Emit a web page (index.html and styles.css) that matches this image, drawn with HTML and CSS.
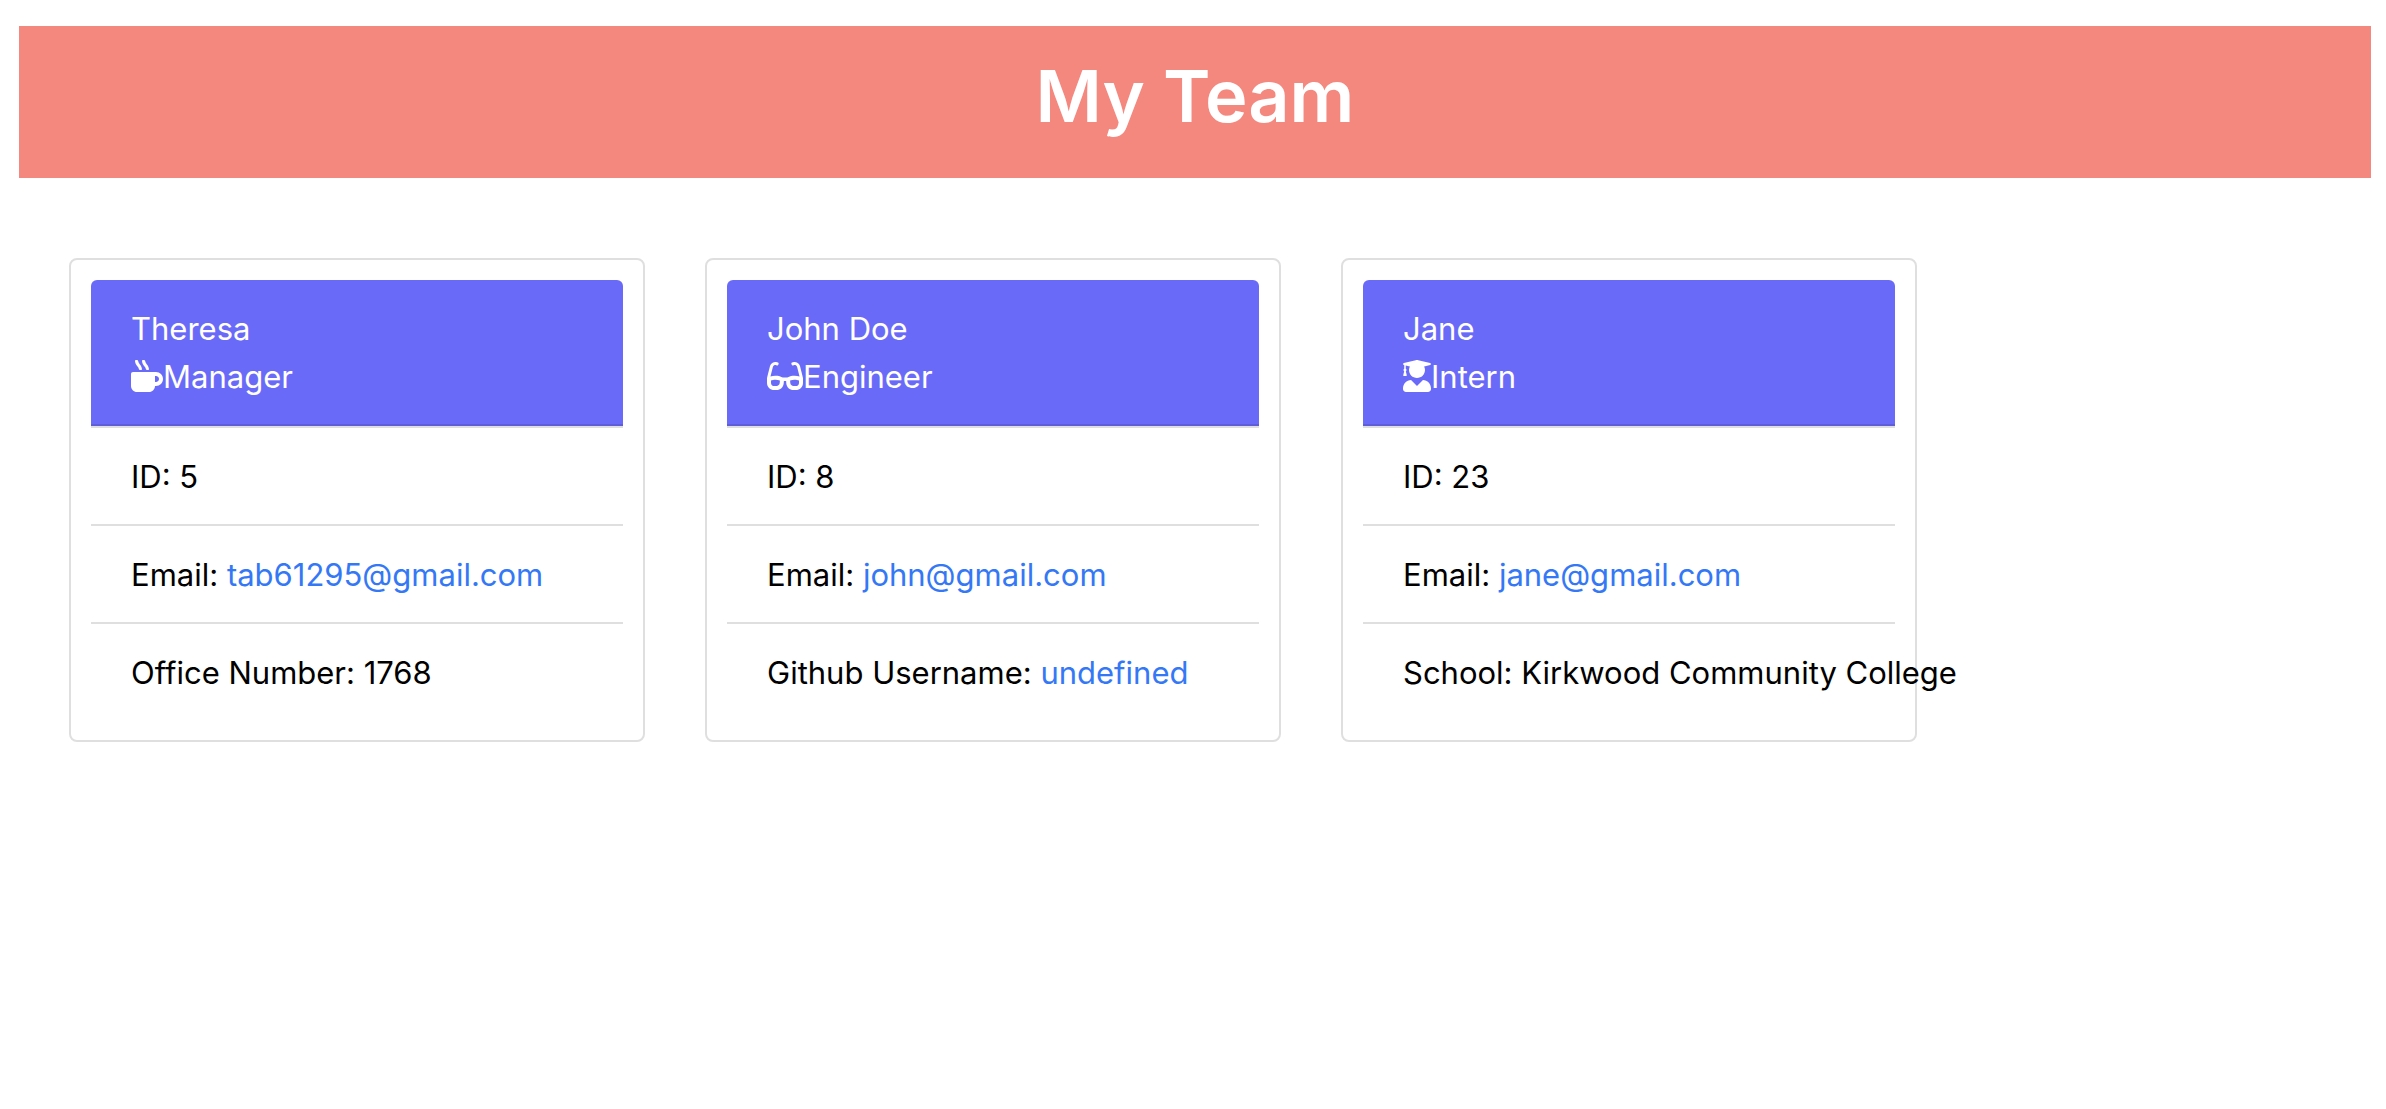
FILE: index.html
```html
<!DOCTYPE html>
<html lang="en">
<head>
  <meta charset="utf-8">
  <meta name="viewport" content="width=device-width, initial-scale=1">
  <title>My Team</title>
  <link rel="stylesheet" href="styles.css">
</head>
<body>
  <header class="banner">
    <h1 class="banner-title">My Team</h1>
  </header>
  <main class="team">
    <section class="card">
      <div class="card-header">
        <div>Theresa</div>
        <div><svg class="icon" viewBox="0 0 512 512" aria-hidden="true"><path d="M127.1 146.5c1.3 7.7 8 13.5 16 13.5h16.5c9.8 0 17.6-8.5 16.3-18-3.8-28.2-16.4-54.2-36.6-74.7-14.4-14.7-23.6-33.3-26.4-53.5C111.8 5.9 105 0 96.8 0H80.4C70.6 0 63 8.5 64.1 18c3.9 31.9 18 61.3 40.6 84.4 12 12.2 19.7 27.5 22.4 44.1zm112 0c1.3 7.7 8 13.5 16 13.5h16.5c9.8 0 17.6-8.5 16.3-18-3.8-28.2-16.4-54.2-36.6-74.7-14.4-14.7-23.6-33.3-26.4-53.5C223.8 5.9 217 0 208.8 0h-16.4c-9.8 0-17.5 8.5-16.3 18 3.9 31.9 18 61.3 40.6 84.4 12 12.2 19.7 27.5 22.4 44.1zM400 192H32c-17.7 0-32 14.3-32 32v192c0 53 43 96 96 96h192c53 0 96-43 96-96h16c61.8 0 112-50.2 112-112s-50.2-112-112-112zm0 160h-16v-96h16c26.5 0 48 21.5 48 48s-21.5 48-48 48z"/></svg>Manager</div>
      </div>
      <ul class="details">
        <li>ID: 5</li>
        <li>Email: <a href="mailto:tab61295@gmail.com">tab61295@gmail.com</a></li>
        <li>Office Number: 1768</li>
      </ul>
    </section>
    <section class="card">
      <div class="card-header">
        <div>John Doe</div>
        <div><svg class="icon" viewBox="0 0 576 512" aria-hidden="true"><path d="M574.1 280.37L528.75 98.66c-5.91-23.7-21.59-44.05-43-55.81-21.44-11.73-46.97-14.11-70.19-6.33l-15.25 5.08c-8.39 2.79-12.92 11.86-10.12 20.24l5.06 15.18c2.79 8.38 11.85 12.91 20.23 10.12l13.18-4.39c10.87-3.62 23-3.57 33.16 1.73 10.29 5.37 17.57 14.56 20.37 25.82l38.46 153.82c-22.19-6.81-49.79-12.46-81.2-12.46-34.77 0-73.98 7.02-114.85 26.74h-73.18c-40.87-19.74-80.08-26.75-114.86-26.75-31.42 0-59.02 5.65-81.21 12.46l38.46-153.83c2.79-11.25 10.09-20.45 20.38-25.81 10.16-5.3 22.28-5.35 33.15-1.73l13.17 4.39c8.38 2.79 17.44-1.74 20.23-10.12l5.06-15.18c2.8-8.38-1.73-17.45-10.12-20.24l-15.25-5.08c-23.22-7.78-48.75-5.41-70.19 6.33-21.41 11.77-37.09 32.11-43 55.8L1.9 280.37A64.218 64.218 0 0 0 0 295.86v70.25C0 429.01 51.58 480 115.2 480h37.12c60.28 0 110.37-45.94 114.88-105.37l2.93-38.63h35.75l2.93 38.63C313.31 434.06 363.4 480 423.68 480h37.12c63.62 0 115.2-50.99 115.2-113.88v-70.25c0-5.23-.64-10.43-1.9-15.5zm-370.72 89.42c-1.97 25.91-24.4 46.21-51.06 46.21H115.2C86.97 416 64 393.62 64 366.11v-37.54c18.12-6.49 43.42-12.92 72.58-12.92 23.86 0 47.26 4.33 69.93 12.92l-3.13 41.22zM512 366.12c0 27.51-22.97 49.88-51.2 49.88h-37.12c-26.67 0-49.1-20.3-51.06-46.21l-3.13-41.22c22.67-8.59 46.08-12.92 69.95-12.92 29.12 0 54.43 6.44 72.55 12.93v37.54z"/></svg>Engineer</div>
      </div>
      <ul class="details">
        <li>ID: 8</li>
        <li>Email: <a href="mailto:john@gmail.com">john@gmail.com</a></li>
        <li>Github Username: <a href="https://github.com/undefined">undefined</a></li>
      </ul>
    </section>
    <section class="card">
      <div class="card-header">
        <div>Jane</div>
        <div><svg class="icon" viewBox="0 0 448 512" aria-hidden="true"><path d="M319.4 320.6L224 416l-95.4-95.4C57.1 323.7 0 382.2 0 454.4v9.6c0 26.5 21.5 48 48 48h352c26.5 0 48-21.5 48-48v-9.6c0-72.2-57.1-130.7-128.6-133.8zM13.6 79.8l6.4 1.5v58.4c-7 4.2-12 11.5-12 20.3 0 8.4 4.6 15.4 11.1 19.7L3.5 242c-1.7 6.9 2.1 14 7.6 14h41.8c5.5 0 9.3-7.1 7.6-14l-15.6-62.3C51.4 175.4 56 168.4 56 160c0-8.8-5-16.1-12-20.3V87.1l66 15.9c-8.6 17.2-14 36.4-14 57 0 70.7 57.3 128 128 128s128-57.3 128-128c0-20.6-5.3-39.8-14-57l96.3-23.2c18.2-4.4 18.2-27.1 0-31.5l-190.4-46c-13-3.1-26.7-3.1-39.7 0L13.6 48.2c-18.1 4.4-18.1 27.2 0 31.6z"/></svg>Intern</div>
      </div>
      <ul class="details">
        <li>ID: 23</li>
        <li>Email: <a href="mailto:jane@gmail.com">jane@gmail.com</a></li>
        <li>School: Kirkwood Community College</li>
      </ul>
    </section>
  </main>
</body>
</html>
```
FILE: styles.css
```css
* {
  box-sizing: border-box;
}

body {
  margin: 0;
  padding: 26px 15px 26px 19px;
  background: #fff;
  color: #000;
  font-family: Inter, "Liberation Sans", sans-serif;
  font-size: 31px;
  line-height: 48px;
}

.banner {
  padding: 22px 20px 34px;
  background: #f4877e;
  color: #fff;
  text-align: center;
}

.banner-title {
  margin: 0;
  font-size: 72px;
  font-weight: 600;
  line-height: 96px;
}

.team {
  display: flex;
  flex-wrap: wrap;
  gap: 60px;
  padding: 80px 50px;
}

.card {
  width: 576px;
  padding: 20px;
  border: 2px solid #dfdfdf;
  border-radius: 8px;
}

.card-header {
  padding: 25px 40px 23px;
  border-bottom: 2px solid #605ddb;
  border-radius: 6px 6px 0 0;
  background: #6a6af9;
  color: #fff;
}

.icon {
  height: 32px;
  vertical-align: -4px;
  fill: currentColor;
}

.details {
  margin: 0;
  padding: 0;
  border-top: 2px solid #dfdfdf;
  list-style: none;
}

.details li {
  padding: 25px 40px 23px;
  white-space: nowrap;
}

.details li + li {
  border-top: 2px solid #dfdfdf;
}

.details a {
  color: #3478f6;
  text-decoration: none;
}
```
